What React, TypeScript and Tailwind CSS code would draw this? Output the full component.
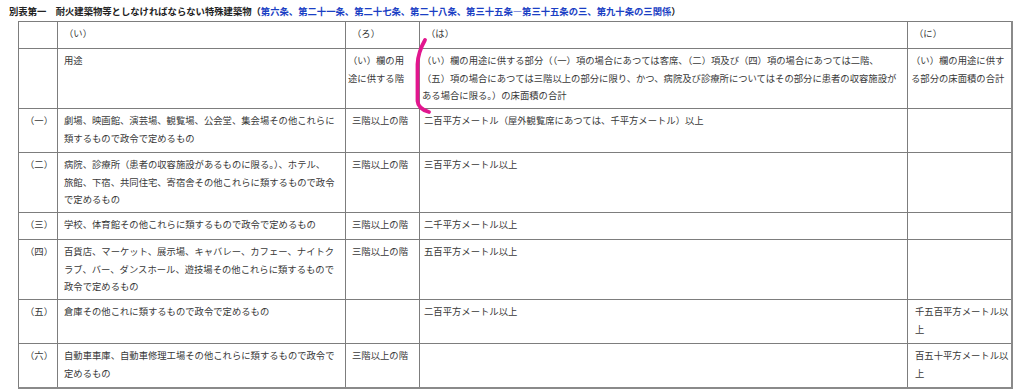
import React from "react";

type Row = {
    no: string;
    use: string[];
    floor: string[];
    area: string[];
    total: string[];
    h: string;
};

const rows: Row[] = [
    {
        no: "（一）",
        use: ["劇場、映画館、演芸場、観覧場、公会堂、集会場その他これらに", "類するもので政令で定めるもの"],
        floor: ["三階以上の階"],
        area: ["二百平方メートル（屋外観覧席にあつては、千平方メートル）以上"],
        total: [],
        h: "h-[44px]",
    },
    {
        no: "（二）",
        use: [
            "病院、診療所（患者の収容施設があるものに限る。）、ホテル、",
            "旅館、下宿、共同住宅、寄宿舎その他これらに類するもので政令",
            "で定めるもの",
        ],
        floor: ["三階以上の階"],
        area: ["三百平方メートル以上"],
        total: [],
        h: "h-[60px]",
    },
    {
        no: "（三）",
        use: ["学校、体育館その他これらに類するもので政令で定めるもの"],
        floor: ["三階以上の階"],
        area: ["二千平方メートル以上"],
        total: [],
        h: "h-[27px]",
    },
    {
        no: "（四）",
        use: [
            "百貨店、マーケット、展示場、キャバレー、カフェー、ナイトク",
            "ラブ、バー、ダンスホール、遊技場その他これらに類するもので",
            "政令で定めるもの",
        ],
        floor: ["三階以上の階"],
        area: ["五百平方メートル以上"],
        total: [],
        h: "h-[60px]",
    },
    {
        no: "（五）",
        use: ["倉庫その他これに類するもので政令で定めるもの"],
        floor: [],
        area: ["二百平方メートル以上"],
        total: ["千五百平方メートル以", "上"],
        h: "h-[44px]",
    },
    {
        no: "（六）",
        use: ["自動車車庫、自動車修理工場その他これらに類するもので政令で", "定めるもの"],
        floor: ["三階以上の階"],
        area: [],
        total: ["百五十平方メートル以", "上"],
        h: "h-[44px]",
    },
];

function Lines({ lines }: { lines: string[] }) {
    return (
        <>
            {lines.map((l, i) => (
                <span key={i} className="block whitespace-nowrap">
                    {l}
                </span>
            ))}
        </>
    );
}

const cell = "border border-[#7d7d7d] align-top pt-[3px] px-[6px]";

export default function App() {
    return (
        <div className="relative w-[1024px] h-[391px] bg-white pl-[9px] text-[9.33px] leading-[17.5px] text-[#383838] font-['Noto_Sans_CJK_JP','Noto_Sans',sans-serif]">
            {/* title */}
            <div className="h-[21px] pt-[3px] font-bold text-[#222] whitespace-nowrap">
                別表第一　耐火建築物等としなければならない特殊建築物（
                <span className="text-[#1b3fc4]">
                    第六条、第二十一条、第二十七条、第二十八条、第三十五条―第三十五条の三、第九十条の三関係
                </span>
                ）
            </div>

            {/* table */}
            <table className="ml-[9px] w-[993px] table-fixed border-collapse border-r-2 border-b-2 border-[#8a8a8a]">
                <colgroup>
                    <col className="w-[39px]" />
                    <col className="w-[288px]" />
                    <col className="w-[74px]" />
                    <col className="w-[488px]" />
                    <col className="w-[104px]" />
                </colgroup>
                <tbody>
                    <tr className="h-[27px]">
                        <td className={cell}></td>
                        <td className={cell}>（い）</td>
                        <td className={cell}>（ろ）</td>
                        <td className={cell}>（は）</td>
                        <td className={cell}>（に）</td>
                    </tr>
                    <tr className="h-[60px]">
                        <td className={cell}></td>
                        <td className={cell}>用途</td>
                        <td className={`${cell} pl-[2px]`}>
                            <Lines lines={["（い）欄の用", "途に供する階"]} />
                        </td>
                        <td className={`${cell} pl-[2px]`}>
                            <Lines
                                lines={[
                                    "（い）欄の用途に供する部分（（一）項の場合にあつては客席、（二）項及び（四）項の場合にあつては二階、",
                                    "（五）項の場合にあつては三階以上の部分に限り、かつ、病院及び診療所についてはその部分に患者の収容施設が",
                                    "ある場合に限る。）の床面積の合計",
                                ]}
                            />
                        </td>
                        <td className={`${cell} pl-[3px]`}>
                            <Lines lines={["（い）欄の用途に供す", "る部分の床面積の合計"]} />
                        </td>
                    </tr>
                    {rows.map((r) => (
                        <tr key={r.no} className={r.h}>
                            <td className={`${cell} px-0 text-center`}>{r.no}</td>
                            <td className={cell}>
                                <Lines lines={r.use} />
                            </td>
                            <td className={cell}>
                                <Lines lines={r.floor} />
                            </td>
                            <td className={`${cell} pl-[4px]`}>
                                <Lines lines={r.area} />
                            </td>
                            <td className={`${cell} pl-[7px]`}>
                                <Lines lines={r.total} />
                            </td>
                        </tr>
                    ))}
                </tbody>
            </table>

            {/* hand-drawn annotation */}
            <svg className="absolute left-0 top-0 pointer-events-none" width="1024" height="391">
                <path
                    d="M425 40 C421 47 418 55 417.5 64 L417.5 101 C418 107 422 110 429 112"
                    fill="none"
                    stroke="#e2168e"
                    strokeWidth="3.8"
                    strokeLinecap="round"
                    strokeLinejoin="round"
                />
            </svg>
        </div>
    );
}
